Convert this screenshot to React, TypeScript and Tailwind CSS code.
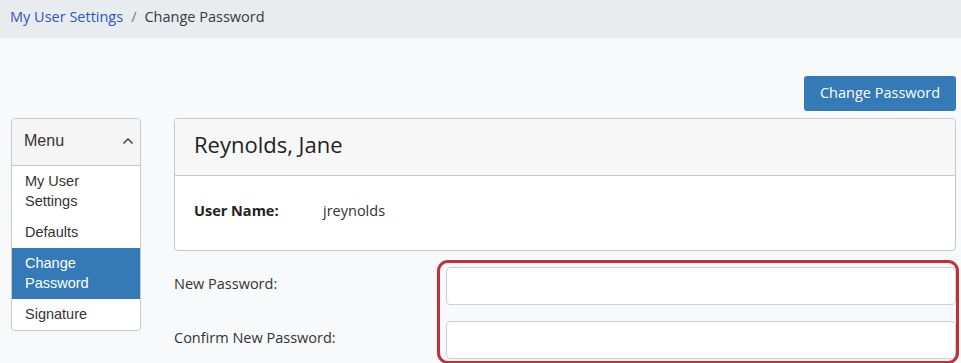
import React from 'react';

const menuItems = [
  { label: 'My User Settings', active: false },
  { label: 'Defaults', active: false },
  { label: 'Change Password', active: true },
  { label: 'Signature', active: false },
];

const App: React.FC = () => {
  return (
    <div className="min-h-[363px] bg-[#f8f9fa] font-['Open_Sans',sans-serif] text-[#212529]">
      <nav className="flex h-[38px] items-center bg-[#e9ecef] px-[10px] pb-[4px] text-[14.5px]">
        <a className="text-[#3153c4]">My User Settings</a>
        <span className="px-[8px] text-[#6c757d]">/</span>
        <span className="text-[#343a40]">Change Password</span>
      </nav>

      <div className="pl-[11px] pr-[5px]">
        <div className="flex justify-end pt-[38px]">
          <button className="h-[35px] w-[152px] rounded-[3px] bg-[#337ab7] pb-[2px] text-[14.5px] text-white">
            Change Password
          </button>
        </div>

        <div className="mt-[7px] flex gap-[33px]">
          <aside className="w-[130px] self-start overflow-hidden rounded-[4px] border border-[#c8c8c8] bg-white font-['Liberation_Sans',Arial,sans-serif]">
            <div className="flex h-[47px] items-center justify-between border-b border-[#c8c8c8] bg-[#f5f5f5] pb-[2px] pl-[12px] pr-[6px] text-[16px] text-[#333]">
              <span>Menu</span>
              <svg width="12" height="8" viewBox="0 0 12 8" fill="none">
                <path d="M1.5 6.5 6 2l4.5 4.5" stroke="#333" strokeWidth="1.4" />
              </svg>
            </div>
            {menuItems.map((item) => (
              <div
                key={item.label}
                className={
                  item.active
                    ? 'bg-[#337ab7] pb-[6px] pl-[13px] pr-[30px] pt-[5px] text-[14.5px] leading-5 text-white'
                    : 'pb-[6px] pl-[13px] pr-[30px] pt-[5px] text-[14.5px] leading-5 text-[#333]'
                }
              >
                {item.label}
              </div>
            ))}
          </aside>

          <main className="flex-1">
            <div className="overflow-hidden rounded-[4px] border border-[#c8c8c8] bg-white">
              <div className="flex h-[57px] items-center border-b border-[#c8c8c8] bg-[#f7f7f7] px-[19px] pb-[6px] text-[22px] text-[#222]">
                Reynolds, Jane
              </div>
              <div className="flex h-[74px] items-center px-[19px] pb-[4px]">
                <span className="w-[129px] text-[14.5px] font-bold text-[#222]">User Name:</span>
                <span className="text-[14.5px] text-[#333]">jreynolds</span>
              </div>
            </div>

            <div className="relative mt-[16px] flex flex-col gap-[16px]">
              <div className="pointer-events-none absolute -top-[7px] left-[263px] -right-[3px] -bottom-[5px] rounded-[11px] border-[3px] border-[#c22f3c]" />
              <div className="flex items-center">
                <label className="w-[272px] pb-[4px] text-[14.5px] text-[#333]">New Password:</label>
                <input type="password" className="h-[38px] flex-1 rounded-[4px] border border-[#cfcfcf] bg-white" />
              </div>
              <div className="flex items-center">
                <label className="w-[272px] pb-[4px] text-[14.5px] text-[#333]">Confirm New Password:</label>
                <input type="password" className="h-[38px] flex-1 rounded-[4px] border border-[#cfcfcf] bg-white" />
              </div>
            </div>
          </main>
        </div>
      </div>
    </div>
  );
};

export default App;
